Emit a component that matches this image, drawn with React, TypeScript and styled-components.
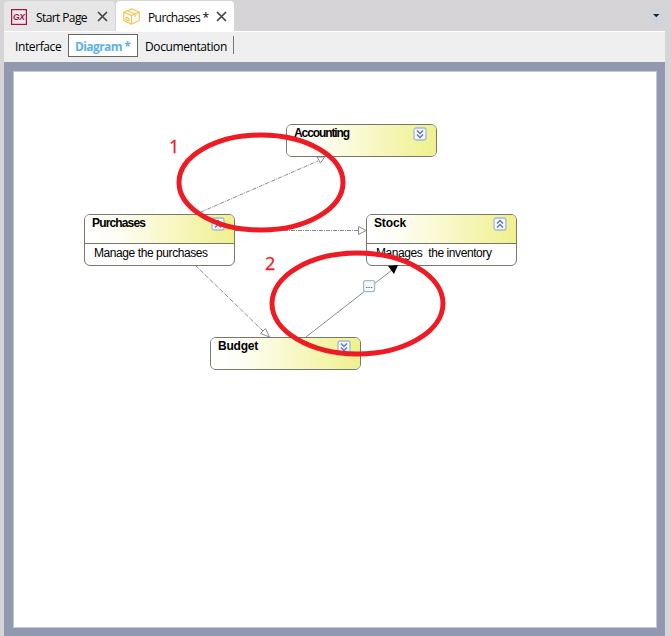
import React from "react";
import styled, { createGlobalStyle } from "styled-components";

const GlobalStyle = createGlobalStyle`
  * { box-sizing: border-box; }
  body { margin: 0; background: #d6d4d7; overflow: hidden; }
`;

const Window = styled.div`
  width: 671px;
  height: 636px;
  padding: 0 6px 0 4px;
  display: flex;
  flex-direction: column;
  background: #d6d4d7;
  color: #000;
  font: 12px "Open Sans", "Noto Sans", sans-serif;
`;

const TabStrip = styled.div`
  flex: none;
  height: 32px;
  padding-top: 1px;
  display: flex;
  border-bottom: 1px solid #fff;
`;

const Tab = styled.div<{ $width: number; $active?: boolean }>`
  width: ${(p) => p.$width}px;
  height: 30px;
  display: flex;
  align-items: center;
  padding: 1px 7px 0 7px;
  border-radius: 4px 4px 0 0;
  background: ${(p) => (p.$active ? "#fff" : "#e6e6e6")};
  & + & { margin-left: 1px; }
`;

const Label = styled.span<{ $spacing: number }>`
  white-space: pre;
  line-height: 16px;
  letter-spacing: ${(p) => p.$spacing}px;
`;

const TabTitle = styled(Label)<{ $gap: number }>`
  margin: 2px 0 0 ${(p) => p.$gap}px;
  flex: 1;
`;

const Dropdown = styled.button`
  margin: 7px 0 0 auto;
  width: 17px;
  height: 16px;
  padding: 0;
  border: 0;
  background: #cfd4df;
  display: flex;
  align-items: center;
  justify-content: center;
`;

const Toolbar = styled.div`
  flex: none;
  height: 30px;
  display: flex;
  align-items: center;
  background: #efefef;
`;

const ViewTab = styled.div<{ $width: number; $pad: number; $active?: boolean }>`
  width: ${(p) => p.$width}px;
  height: 23px;
  margin-bottom: 3px;
  display: flex;
  align-items: center;
  padding: 3px 0 0 ${(p) => p.$pad}px;
  border: ${(p) => (p.$active ? "1px solid #666" : "0")};
  background: ${(p) => (p.$active ? "#fff" : "transparent")};
  color: ${(p) => (p.$active ? "#5eb1e8" : "#000")};
  font-weight: ${(p) => (p.$active ? 700 : 400)};
`;

const Divider = styled.div`
  width: 1px;
  height: 18px;
  margin-bottom: 4px;
  background: #777;
`;

const Frame = styled.div`
  flex: 1;
  padding: 9px 8px 8px 9px;
  background: #9199b0;
  display: flex;
`;

const Canvas = styled.div`
  flex: 1;
  position: relative;
  border: 1px solid #c2c8d5;
  background: #fff;
`;

const Lines = styled.svg`
  position: absolute;
  left: -14px;
  top: -72px;
  width: 671px;
  height: 636px;
  pointer-events: none;
`;

const Node = styled.div<{ $x: number; $y: number; $height: number }>`
  position: absolute;
  left: ${(p) => p.$x - 14}px;
  top: ${(p) => p.$y - 72}px;
  width: 151px;
  height: ${(p) => p.$height}px;
  border: 1px solid #77776c;
  border-radius: 6px;
  background: #fff;
  overflow: hidden;
  font-family: "Liberation Sans", Arial, sans-serif;
`;

const NodeHeader = styled.div<{ $open?: boolean }>`
  height: ${(p) => (p.$open ? "28px" : "100%")};
  display: flex;
  justify-content: space-between;
  align-items: flex-start;
  padding: 0 9px 0 7px;
  font-weight: 700;
  background: linear-gradient(90deg, #fff 0%, #fefef6 20%, #f0f08e 100%);
`;

const NodeBody = styled.div`
  display: flex;
  border-top: 1px solid #77776c;
  padding: 1px 0 0 9px;
`;

const Toggle = styled.svg`
  width: 14px;
  height: 14px;
  margin-top: 2px;
`;

const Mark = styled.span<{ $x: number; $y: number }>`
  position: absolute;
  left: ${(p) => p.$x - 14}px;
  top: ${(p) => p.$y - 72}px;
  color: #ed1c24;
  font: 18px/20px "Open Sans", sans-serif;
  -webkit-text-stroke: 0.3px #ed1c24;
`;

const Close = () => (
  <svg width="11" height="11" viewBox="0 0 11 11">
    <path d="M1 1l9 9M10 1l-9 9" stroke="#444" strokeWidth="1.7" />
  </svg>
);

const GxLogo = () => (
  <svg width="16" height="16" viewBox="0 0 16 16" fill="none">
    <rect x=".6" y=".6" width="14.8" height="14.8" fill="#f0e6eb" stroke="#9c1645" strokeWidth="1.2" />
    <text x="2" y="11.2" fontFamily="Liberation Sans" fontWeight="700" fontStyle="italic" fontSize="8.5" textLength="12" fill="#9c1645">GX</text>
  </svg>
);

const BoxIcon = () => (
  <svg width="17" height="17" viewBox="0 0 17 17" fill="none" stroke="#f3c348" strokeWidth="1.1" strokeLinejoin="round">
    <path d="M.8 4.2L8.500 .8l7.700 3.400v8.300l-7.700 3.800L.8 12.500z M.8 4.200l7.700 3.300 7.700-3.300 M8.500 7.500v8.800 M4.300 2.700l7.700 3.200v3.200 M3 9.300l3 1.300v2.500l-3-1.300z" />
  </svg>
);

const Chevrons = ({ up }: { up?: boolean }) => (
  <Toggle viewBox="0 0 14 14" fill="none">
    <rect x="1" y="1" width="12" height="12" rx="2" fill="#f5f8fb" stroke="#a3b9d2" strokeWidth="1.3" />
    <path
      d={up ? "M4 6.5l3-3 3 3M4 10.5l3-3 3 3" : "M4 3.5l3 3 3-3M4 7.5l3 3 3-3"}
      stroke="#6279ae"
      strokeWidth="1.5"
    />
  </Toggle>
);

type Item = { x: number; y: number; title: string; spacing: number; body?: string };

const nodes: Item[] = [
  { x: 286, y: 124, title: "Accounting", spacing: -1.1 },
  { x: 84, y: 214, title: "Purchases", spacing: -0.85, body: "Manage the purchases" },
  { x: 366, y: 214, title: "Stock", spacing: -0.15, body: "Manages  the inventory" },
  { x: 210, y: 337, title: "Budget", spacing: -0.2 },
];

const App = () => (
  <>
    <GlobalStyle />
    <Window>
      <TabStrip>
        <Tab $width={111}>
          <GxLogo />
          <TabTitle $gap={9} $spacing={-0.6}>Start Page</TabTitle>
          <Close />
        </Tab>
        <Tab $width={118} $active>
          <BoxIcon />
          <TabTitle $gap={8} $spacing={-0.6}>Purchases *</TabTitle>
          <Close />
        </Tab>
        <Dropdown>
          <svg width="7" height="4"><path d="M0 0h6.5l-3.2 3.2z" fill="#222" /></svg>
        </Dropdown>
      </TabStrip>
      <Toolbar>
        <ViewTab $width={64} $pad={11}><Label $spacing={-0.4}>Interface</Label></ViewTab>
        <ViewTab $width={70} $pad={6} $active><Label $spacing={-0.6}>Diagram *</Label></ViewTab>
        <ViewTab $width={95} $pad={7}><Label $spacing={-0.4}>Documentation</Label></ViewTab>
        <Divider />
      </Toolbar>
      <Frame>
        <Canvas>
          <Lines viewBox="0 0 671 636" fill="none">
            <g stroke="#8b8b8b">
              <path d="M201 212L318 161M235 230.5H358M195 265L263 331" strokeDasharray="4 1 1 1" />
              <path d="M306 337L392 270" />
              <path d="M317 157l7.5 0-4 6zM358.500 226.500l7.500 4-7.500 4zM260.500 333.500l5-5 4 8.500z" fill="#fff" />
            </g>
            <rect x="363.600" y="280.600" width="11" height="11" rx="2" fill="#f7f9fc" stroke="#a3b9d2" strokeWidth="1.3" />
            <path d="M366 287.500h7" stroke="#5b72a8" strokeDasharray="1.500 .9" />
          </Lines>
          {nodes.map((n) => (
            <Node key={n.title} $x={n.x} $y={n.y} $height={n.body ? 52 : 33}>
              <NodeHeader $open={!!n.body}>
                <Label $spacing={n.spacing}>{n.title}</Label>
                <Chevrons up={!!n.body} />
              </NodeHeader>
              {n.body && <NodeBody><Label $spacing={-0.42}>{n.body}</Label></NodeBody>}
            </Node>
          ))}
          <Lines viewBox="0 0 671 636" fill="none">
            <path d="M388 266l10-1-4 9z" fill="#000" />
            <g stroke="#ed1c24" strokeWidth="5">
              <ellipse cx="261" cy="182.500" rx="82" ry="47.500" />
              <ellipse cx="357.500" cy="303.500" rx="85.500" ry="50.500" />
            </g>
          </Lines>
          <Mark $x={169} $y={136}>1</Mark>
          <Mark $x={265} $y={253}>2</Mark>
        </Canvas>
      </Frame>
    </Window>
  </>
);

export default App;
